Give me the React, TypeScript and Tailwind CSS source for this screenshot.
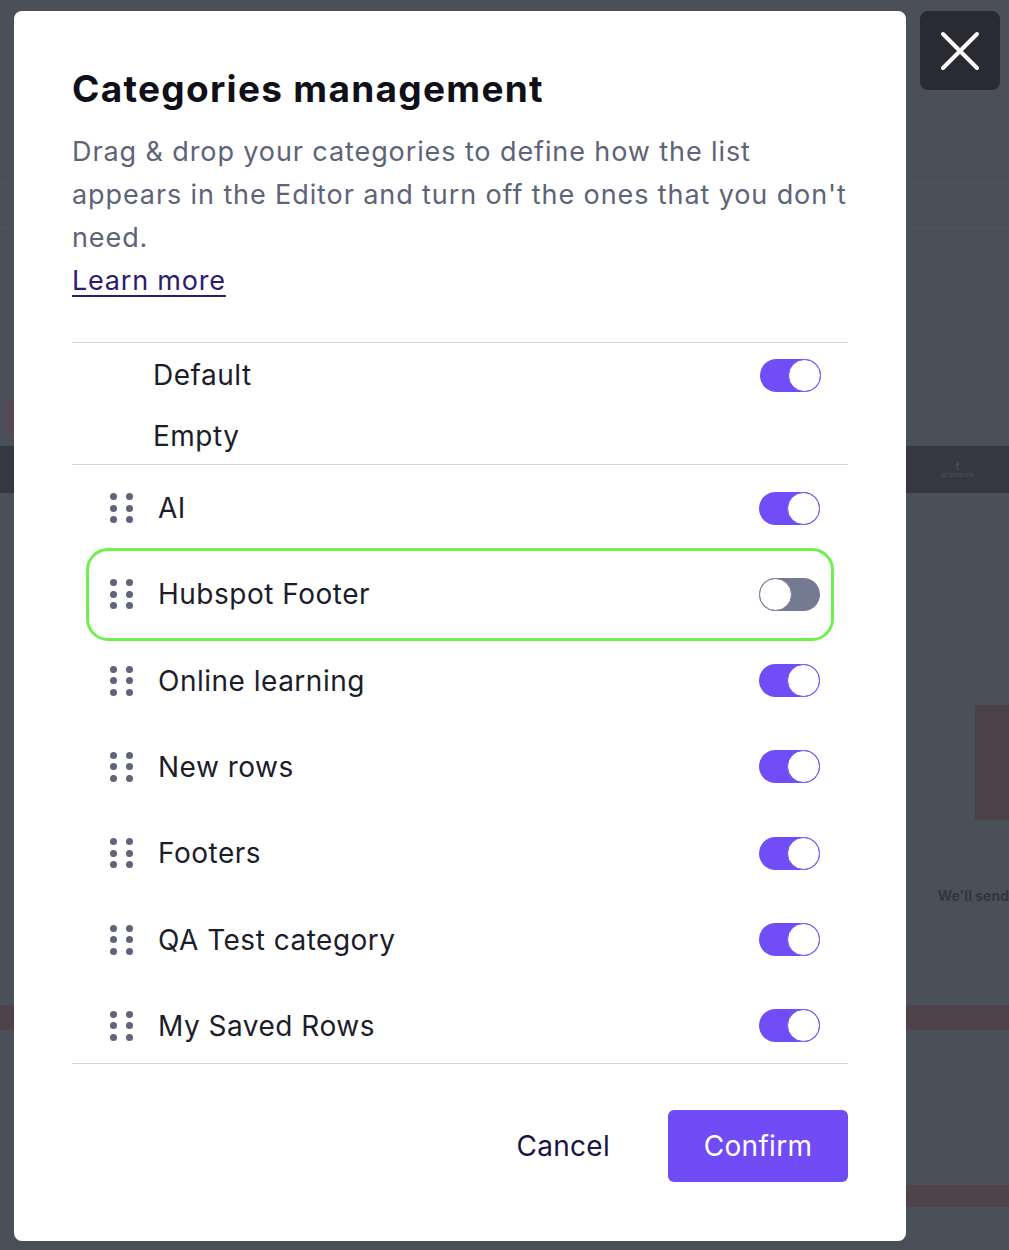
import React, { useState } from "react";

type Category = { id: string; name: string; enabled: boolean };

const initialCategories: Category[] = [
  { id: "ai", name: "AI", enabled: true },
  { id: "hubspot", name: "Hubspot Footer", enabled: false },
  { id: "online", name: "Online learning", enabled: true },
  { id: "newrows", name: "New rows", enabled: true },
  { id: "footers", name: "Footers", enabled: true },
  { id: "qa", name: "QA Test category", enabled: true },
  { id: "saved", name: "My Saved Rows", enabled: true },
];

function Toggle({ on, onChange }: { on: boolean; onChange?: () => void }) {
  return (
    <button
      type="button"
      onClick={onChange}
      className={`flex h-[33px] w-[61px] shrink-0 items-center rounded-full p-0 ${
        on ? "justify-end bg-[#704df6]" : "justify-start bg-[#747a92]"
      }`}
    >
      <span
        className={`block h-[33px] w-[33px] rounded-full border bg-white ${
          on ? "border-[#704df6]" : "border-[#747a92]"
        }`}
      />
    </button>
  );
}

function DragHandle() {
  return (
    <span className="grid w-[23px] shrink-0 grid-cols-2 gap-x-[8px] gap-y-[4.5px]">
      {[0, 1, 2, 3, 4, 5].map((i) => (
        <span key={i} className="block h-[7px] w-[7px] rounded-full bg-[#5f6478]" />
      ))}
    </span>
  );
}

export default function App() {
  const [cats, setCats] = useState(initialCategories);
  const [defaultOn, setDefaultOn] = useState(true);

  const flip = (id: string) =>
    setCats((c) => c.map((x) => (x.id === id ? { ...x, enabled: !x.enabled } : x)));

  return (
    <div className="relative h-[1250px] w-full overflow-hidden bg-[#4b4f58] font-['Inter','Noto_Sans',sans-serif]">
      {/* blurred page behind the overlay */}
      <div className="flex h-full flex-col">
        <div className="h-[183px] border-b border-[#50545d]" />
        <div className="h-[45px] border-b border-[#50545d]" />
        <div className="h-[172px]" />
        <div className="flex h-[37px] items-center">
          <span className="ml-[5px] block h-[37px] w-[12px] rounded-l-lg bg-[#554a52]" />
        </div>
        <div className="h-[9px]" />
        <div className="flex h-[47px] justify-end bg-[#363840]">
          <div className="flex w-[103px] flex-col items-center justify-center text-[#4b4e57]">
            <span className="text-[10px] font-bold leading-none">f</span>
            <span className="text-[6px] leading-tight">@facebook</span>
          </div>
        </div>
        <div className="h-[212px]" />
        <div className="flex h-[115px] justify-end">
          <div className="h-[115px] w-[34px] bg-[#4a4249]" />
        </div>
        <div className="flex h-[150px] items-center justify-end">
          <span className="text-[14px] font-bold text-[#33363d] whitespace-nowrap">We'll send</span>
        </div>
        <div className="h-[35px]" />
        <div className="h-[25px] bg-[#4f434b]" />
        <div className="h-[155px]" />
        <div className="flex h-[22px] justify-end">
          <div className="w-[103px] bg-[#4f434b]" />
        </div>
      </div>

      {/* close button */}
      <button
        type="button"
        className="absolute left-[920px] top-[11px] flex h-[79px] w-[80px] items-center justify-center rounded-lg bg-[#2a2b30]"
      >
        <svg width="40" height="40" viewBox="0 0 40 40" fill="none">
          <path d="M3 3 L37 37 M37 3 L3 37" stroke="white" strokeWidth="4" strokeLinecap="round" />
        </svg>
      </button>

      {/* modal */}
      <div className="absolute left-[14px] top-[11px] flex h-[1230px] w-[892px] flex-col rounded-lg bg-white px-[58px] pt-[56px]">
        <h1 className="text-[37px] font-bold leading-[44px] tracking-[1.3px] text-[#101018]">
          Categories management
        </h1>
        <p className="mr-[-16px] mt-[19px] text-[27px] leading-[43px] tracking-[0.9px] text-[#5d6478]">
          Drag &amp; drop your categories to define how the list appears in the Editor and turn off the ones that
          you don't need.
          <br />
          <a
            href="#"
            className="tracking-[0.8px] text-[#2d1b70] underline decoration-[1.5px] underline-offset-[5px]"
          >
            Learn more
          </a>
        </p>

        <div className="mt-[40px] border-t border-[#d6d6d6]">
          <div className="flex h-[64px] items-center justify-between pl-[81px] pr-[27px]">
            <span className="text-[28px] tracking-[0.5px] text-[#1c1d2b]">Default</span>
            <Toggle on={defaultOn} onChange={() => setDefaultOn(!defaultOn)} />
          </div>
          <div className="flex h-[57px] items-center pl-[81px]">
            <span className="text-[28px] tracking-[0.5px] text-[#1c1d2b]">Empty</span>
          </div>
        </div>

        <div className="flex flex-col gap-[26.33px] border-y border-[#d6d6d6] pb-[7px] pt-[13px]">
          {cats.map((c) => (
            <div key={c.id} className="relative flex h-[60px] items-center pl-[38px] pr-[28px]">
              {c.id === "hubspot" && (
                <span className="pointer-events-none absolute -bottom-[17px] left-[14px] right-[14px] -top-[16px] rounded-[22px] border-[3px] border-[#6ff04e]" />
              )}
              <DragHandle />
              <span className="ml-[25px] flex-1 text-[28px] tracking-[0.5px] text-[#1c1d2b]">{c.name}</span>
              <Toggle on={c.enabled} onChange={() => flip(c.id)} />
            </div>
          ))}
        </div>

        <div className="mt-[46px] flex items-center justify-end">
          <button type="button" className="mr-[58px] text-[28px] tracking-[0.3px] text-[#1b1340]">
            Cancel
          </button>
          <button
            type="button"
            className="flex h-[72px] w-[180px] items-center justify-center rounded-md bg-[#704bf6] text-[28px] tracking-[0.3px] text-white"
          >
            Confirm
          </button>
        </div>
      </div>
    </div>
  );
}
